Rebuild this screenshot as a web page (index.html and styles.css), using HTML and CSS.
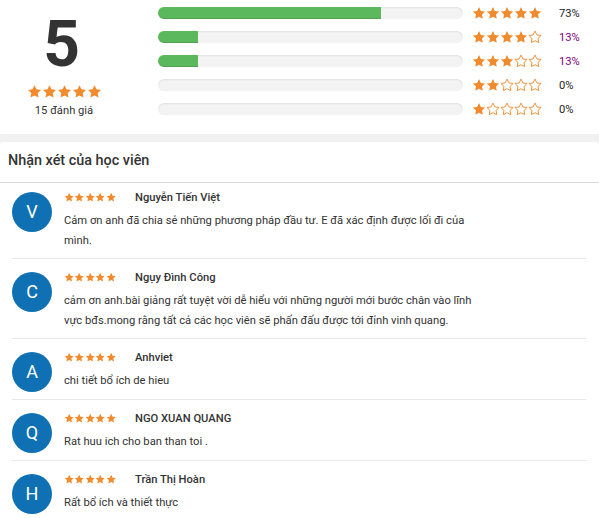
FILE: index.html
```html
<!DOCTYPE html>
<html lang="vi">
<head>
    <meta charset="UTF-8">
    <meta name="viewport" content="width=device-width, initial-scale=1.0">
    <title>Đánh giá khóa học</title>
    <link rel="stylesheet" href="styles.css">
</head>
<body>
    <svg class="defs" width="0" height="0">
        <symbol id="star" viewBox="0 0 24 24">
            <path d="M12 1.8l3.2 6.6 7.2 1-5.2 5.1 1.2 7.2L12 18.3l-6.4 3.4 1.2-7.2L1.6 9.4l7.2-1z"/>
        </symbol>
    </svg>

    <div class="summary">
        <div class="score">
            <div class="score-num">5</div>
            <div class="stars big">
                <svg class="on"><use href="#star"/></svg><svg class="on"><use href="#star"/></svg><svg class="on"><use href="#star"/></svg><svg class="on"><use href="#star"/></svg><svg class="on"><use href="#star"/></svg>
            </div>
            <div class="score-count">15 đánh giá</div>
        </div>

        <div class="bars">
            <div class="bar-row">
                <div class="bar"><div class="fill" style="width: 73%"></div></div>
                <div class="stars mid">
                    <svg class="on"><use href="#star"/></svg><svg class="on"><use href="#star"/></svg><svg class="on"><use href="#star"/></svg><svg class="on"><use href="#star"/></svg><svg class="on"><use href="#star"/></svg>
                </div>
                <span class="pct">73%</span>
            </div>
            <div class="bar-row">
                <div class="bar"><div class="fill" style="width: 13%"></div></div>
                <div class="stars mid">
                    <svg class="on"><use href="#star"/></svg><svg class="on"><use href="#star"/></svg><svg class="on"><use href="#star"/></svg><svg class="on"><use href="#star"/></svg><svg class="off"><use href="#star"/></svg>
                </div>
                <span class="pct visited">13%</span>
            </div>
            <div class="bar-row">
                <div class="bar"><div class="fill" style="width: 13%"></div></div>
                <div class="stars mid">
                    <svg class="on"><use href="#star"/></svg><svg class="on"><use href="#star"/></svg><svg class="on"><use href="#star"/></svg><svg class="off"><use href="#star"/></svg><svg class="off"><use href="#star"/></svg>
                </div>
                <span class="pct visited">13%</span>
            </div>
            <div class="bar-row">
                <div class="bar"><div class="fill" style="width: 0%"></div></div>
                <div class="stars mid">
                    <svg class="on"><use href="#star"/></svg><svg class="on"><use href="#star"/></svg><svg class="off"><use href="#star"/></svg><svg class="off"><use href="#star"/></svg><svg class="off"><use href="#star"/></svg>
                </div>
                <span class="pct">0%</span>
            </div>
            <div class="bar-row">
                <div class="bar"><div class="fill" style="width: 0%"></div></div>
                <div class="stars mid">
                    <svg class="on"><use href="#star"/></svg><svg class="off"><use href="#star"/></svg><svg class="off"><use href="#star"/></svg><svg class="off"><use href="#star"/></svg><svg class="off"><use href="#star"/></svg>
                </div>
                <span class="pct">0%</span>
            </div>
        </div>
    </div>

    <div class="reviews">
        <h3 class="reviews-title">Nhận xét của học viên</h3>

        <div class="review-list">
            <div class="review">
                <div class="avatar">V</div>
                <div class="review-body">
                    <div class="review-head">
                        <div class="stars small">
                            <svg class="on"><use href="#star"/></svg><svg class="on"><use href="#star"/></svg><svg class="on"><use href="#star"/></svg><svg class="on"><use href="#star"/></svg><svg class="on"><use href="#star"/></svg>
                        </div>
                        <span class="name">Nguyễn Tiến Việt</span>
                    </div>
                    <p class="review-text">Cảm ơn anh đã chia sẻ những phương pháp đầu tư. E đã xác định được lối đi của mình.</p>
                </div>
            </div>

            <div class="review">
                <div class="avatar">C</div>
                <div class="review-body">
                    <div class="review-head">
                        <div class="stars small">
                            <svg class="on"><use href="#star"/></svg><svg class="on"><use href="#star"/></svg><svg class="on"><use href="#star"/></svg><svg class="on"><use href="#star"/></svg><svg class="on"><use href="#star"/></svg>
                        </div>
                        <span class="name">Ngụy Đình Công</span>
                    </div>
                    <p class="review-text">cảm ơn anh.bài giảng rất tuyệt vời dễ hiểu với những người mới bước chân vào lĩnh vực bđs.mong rằng tất cả các học viên sẽ phấn đấu được tới đỉnh vinh quang.</p>
                </div>
            </div>

            <div class="review">
                <div class="avatar">A</div>
                <div class="review-body">
                    <div class="review-head">
                        <div class="stars small">
                            <svg class="on"><use href="#star"/></svg><svg class="on"><use href="#star"/></svg><svg class="on"><use href="#star"/></svg><svg class="on"><use href="#star"/></svg><svg class="on"><use href="#star"/></svg>
                        </div>
                        <span class="name">Anhviet</span>
                    </div>
                    <p class="review-text">chi tiết bổ ích de hieu</p>
                </div>
            </div>

            <div class="review">
                <div class="avatar">Q</div>
                <div class="review-body">
                    <div class="review-head">
                        <div class="stars small">
                            <svg class="on"><use href="#star"/></svg><svg class="on"><use href="#star"/></svg><svg class="on"><use href="#star"/></svg><svg class="on"><use href="#star"/></svg><svg class="on"><use href="#star"/></svg>
                        </div>
                        <span class="name">NGO XUAN QUANG</span>
                    </div>
                    <p class="review-text">Rat huu ich cho ban than toi .</p>
                </div>
            </div>

            <div class="review">
                <div class="avatar">H</div>
                <div class="review-body">
                    <div class="review-head">
                        <div class="stars small">
                            <svg class="on"><use href="#star"/></svg><svg class="on"><use href="#star"/></svg><svg class="on"><use href="#star"/></svg><svg class="on"><use href="#star"/></svg><svg class="on"><use href="#star"/></svg>
                        </div>
                        <span class="name">Trần Thị Hoàn</span>
                    </div>
                    <p class="review-text">Rất bổ ích và thiết thực</p>
                </div>
            </div>
        </div>
    </div>
</body>
</html>
```

FILE: styles.css
```css
body {
    margin: 0;
    font-family: Roboto, "Liberation Sans", Arial, sans-serif;
    font-size: 11.2px;
    color: #333;
    background-color: #f1f1f1;
}
.defs {
    position: absolute;
}

/* stars */
.stars {
    display: flex;
}
.stars svg {
    display: block;
}
.stars .on {
    fill: #f28b2e;
}
.stars .off {
    fill: #fff;
    stroke: #f28b2e;
    stroke-width: 1.6;
}
.stars.big svg {
    width: 15px;
    height: 15px;
}
.stars.mid svg {
    width: 14px;
    height: 14px;
}
.stars.small svg {
    width: 10.4px;
    height: 10.4px;
}

/* summary */
.summary {
    display: flex;
    height: 134px;
    background-color: #fff;
}
.score {
    width: 128px;
    display: flex;
    flex-direction: column;
    align-items: center;
}
.score-num {
    font-size: 64px;
    font-weight: bold;
    line-height: 1;
    margin-top: 13px;
    margin-right: 5px;
}
.stars.big {
    margin-top: 7px;
}
.score-count {
    margin-top: 5px;
}
.bars {
    margin-left: 30px;
    padding-top: 1px;
}
.bar-row {
    display: flex;
    align-items: center;
    height: 24px;
}
.bar {
    width: 305px;
    height: 12px;
    border-radius: 6px;
    background-color: #f3f3f3;
    box-shadow: inset 0 1px 2px rgba(0, 0, 0, 0.08);
    overflow: hidden;
}
.fill {
    height: 100%;
    background-color: #5cb85c;
    box-shadow: inset 0 -1px 0 rgba(0, 0, 0, 0.12);
}
.stars.mid {
    margin-left: 9px;
    width: 70px;
}
.pct {
    margin-left: 17px;
    color: #222;
}
.pct.visited {
    color: #800080;
}

/* reviews */
.reviews {
    margin-top: 8px;
    background-color: #fff;
    border-radius: 3px 3px 0 0;
    min-height: 376px;
}
.reviews-title {
    margin: 0;
    height: 40px;
    line-height: 38px;
    padding: 0 8px;
    font-size: 14.4px;
    font-weight: 500;
    border-bottom: 1px solid #ddd;
}
.review-list {
    padding: 0 12px;
}
.review {
    display: flex;
    padding: 10px 0 7px;
    border-bottom: 1px solid #e8e8e8;
}
.review:first-child {
    padding-top: 6px;
}
.avatar {
    flex: none;
    width: 40px;
    height: 40px;
    margin-top: 3px;
    border-radius: 50%;
    background-color: #0f71b3;
    color: #fff;
    font-size: 18px;
    line-height: 40px;
    text-align: center;
}
.review-body {
    margin-left: 12px;
}
.review-head {
    display: flex;
    align-items: center;
    height: 16px;
}
.name {
    margin-left: 19px;
    font-weight: 500;
}
.review-text {
    margin: 6px 0 0;
    width: 420px;
    line-height: 20px;
}
```
